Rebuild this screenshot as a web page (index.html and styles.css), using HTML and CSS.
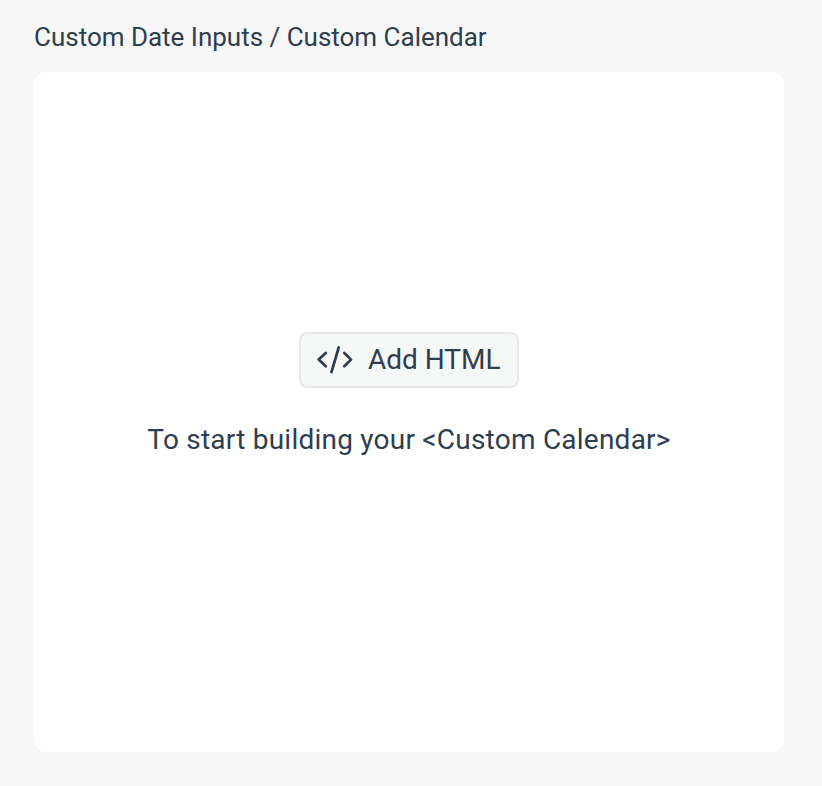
FILE: index.html
```html
<!DOCTYPE html>
<html lang="en">
<head>
<meta charset="utf-8">
<title>Custom Calendar</title>
<link rel="stylesheet" href="styles.css">
</head>
<body>
<h1 class="title">Custom Date Inputs / Custom Calendar</h1>
<main class="canvas">
  <button class="add" type="button">
    <svg class="icon" width="36" height="28" viewBox="0 0 36 28" aria-hidden="true"><path d="M8.700 7 1.700 13.600l7 6.600M27.300 7l6.700 6.600-6.700 6.600M21.700 1.500 14.500 26"/></svg>
    <span>Add HTML</span>
  </button>
  <p class="hint">To start building your &lt;Custom Calendar&gt;</p>
</main>
</body>
</html>
```
FILE: styles.css
```css
* { box-sizing: border-box; }
body {
  margin: 0;
  height: 786px;
  padding: 20px 38px 34px 34px;
  display: flex;
  flex-direction: column;
  background: #f7f7f7;
  color: #2f3e4e;
  font-family: Roboto, sans-serif;
}
.title {
  margin: 0 0 18px;
  font-size: 26px;
  line-height: 34px;
  font-weight: 400;
  letter-spacing: -0.01px;
  white-space: nowrap;
}
.canvas {
  flex: 1;
  display: flex;
  flex-direction: column;
  align-items: center;
  padding-top: 260px;
  background: #fff;
  border-radius: 12px;
}
.add {
  display: flex;
  align-items: center;
  gap: 15px;
  width: 220px;
  height: 56px;
  padding: 0 16px;
  border: 2px solid #e7e9e9;
  border-radius: 8px;
  background: #f6f8f7;
  color: inherit;
  font: 400 28px/32px Roboto, sans-serif;
  white-space: nowrap;
}
.icon {
  flex: none;
  fill: none;
  stroke: currentColor;
  stroke-width: 2.7;
  stroke-linecap: round;
  stroke-linejoin: round;
}
.hint {
  margin: 36px 0 0;
  font-size: 28px;
  line-height: 32px;
  letter-spacing: 0.23px;
  white-space: nowrap;
}
```
